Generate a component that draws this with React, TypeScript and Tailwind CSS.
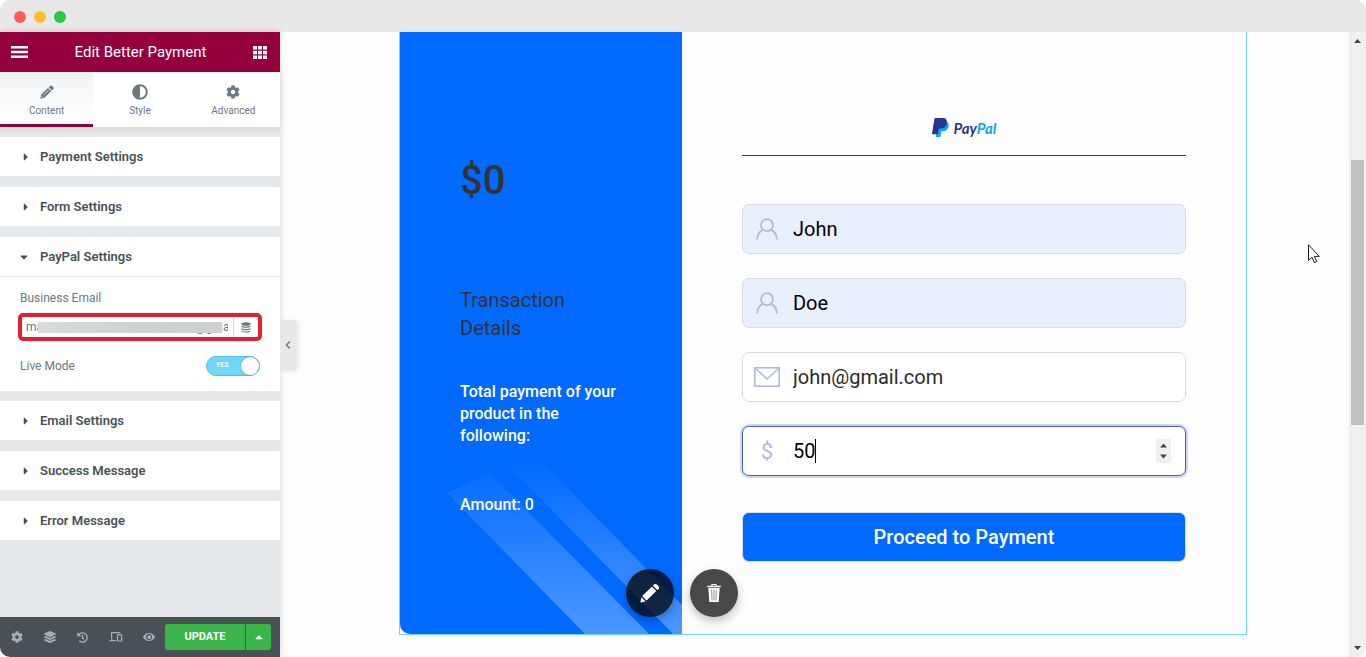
import React from "react";
import {
  FaAdjust,
  FaCaretDown,
  FaCaretRight,
  FaCaretUp,
  FaCog,
  FaEye,
  FaHistory,
  FaLayerGroup,
} from "react-icons/fa";

function TitleBar() {
  return (
    <div className="flex h-8 shrink-0 items-center gap-2 bg-[#e8e8e8] px-[14px] pt-[2px]">
      <span className="size-3 rounded-full bg-[#fc5f57]" />
      <span className="size-3 rounded-full bg-[#fdbc2e]" />
      <span className="size-3 rounded-full bg-[#28c841]" />
    </div>
  );
}

function PencilIcon() {
  return (
    <svg viewBox="0 0 14 14" className="my-px size-[14px]" fill="currentColor">
      <path d="M10 .9c.6-.6 1.300-.6 1.800-.1l1.500 1.500c.5.5.5 1.200 0 1.800l-1.400 1.300L8.700 2.200z" />
      <path d="M8 2.900l3.200 3.200-6.700 6.700-3.500.9c-.4.100-.7-.2-.6-.6l.8-3.500z" />
      <path d="M3.300 10.300l5.300-5.300" stroke="#f7f8f9" strokeWidth="0.700" fill="none" />
      <path d="M1.600 11.200l1.300 1.300" stroke="#f7f8f9" strokeWidth="0.900" fill="none" />
    </svg>
  );
}

function Tab({ label, icon, active }: { label: string; icon: React.ReactNode; active?: boolean }) {
  return (
    <button
      type="button"
      className={
        active
          ? "flex flex-1 flex-col items-center border-b-[3px] border-[#93003c] bg-linear-to-b from-[#f1f3f5] to-white pt-3 text-[#6d7882]"
          : "flex flex-1 flex-col items-center border-b-[3px] border-white bg-white pt-3 text-[#6d7882]"
      }
    >
      {icon}
      <span className="mt-[3px] text-[10px] leading-4">{label}</span>
    </button>
  );
}

function Section({ title, open, children }: { title: string; open?: boolean; children?: React.ReactNode }) {
  return (
    <section className="bg-white">
      <button
        type="button"
        aria-expanded={!!open}
        className="flex h-10 w-full items-center border-b border-[#e6e9ec] text-left text-[13px] font-semibold text-[#495157]"
      >
        <span className="flex w-10 items-center pl-[18px]">
          {open ? <FaCaretDown className="size-3" /> : <FaCaretRight className="ml-[2px] size-3" />}
        </span>
        {title}
      </button>
      {children}
    </section>
  );
}

function DevicesIcon() {
  return (
    <svg viewBox="0 0 14 12" className="h-3 w-[14px]" fill="none" stroke="currentColor" strokeWidth="1.2">
      <path d="M2.6 8.5V1.6h8.8M0.6 9.7h6.6" />
      <rect x="8.6" y="3.6" width="4" height="6.4" rx="0.4" />
    </svg>
  );
}

function Sidebar() {
  return (
    <aside className="relative flex w-[280px] shrink-0 flex-col bg-[#e6e9ec] shadow-[0_0_6px_rgba(0,0,0,0.16)]">
      <header className="flex h-10 items-center justify-between bg-[#93003c] pr-[13px] pl-[11px] text-white">
        <button type="button" aria-label="Menu">
          <svg viewBox="0 0 17 12" className="h-3 w-[17px]" fill="currentColor">
            <path d="M0 0h17v2.4H0zM0 4.8h17v2.4H0zM0 9.6h17v2.4H0z" />
          </svg>
        </button>
        <h1 className="text-[15px] leading-5">Edit Better Payment</h1>
        <button type="button" aria-label="Widgets">
          <svg viewBox="0 0 14 13" className="h-[13px] w-[14px]" fill="currentColor">
            <path d="M0 0h4v3.5H0zM5 0h4v3.5H5zM10 0h4v3.5h-4zM0 4.7h4v3.5H0zM5 4.7h4v3.5H5zM10 4.7h4v3.5h-4zM0 9.4h4v3.5H0zM5 9.4h4v3.5H5zM10 9.4h4v3.5h-4z" />
          </svg>
        </button>
      </header>
      <nav className="flex h-[55px] shadow-[0_2px_8px_rgba(0,0,0,0.08)]">
        <Tab label="Content" active icon={<PencilIcon />} />
        <Tab label="Style" icon={<FaAdjust className="size-4" />} />
        <Tab label="Advanced" icon={<FaCog className="my-px size-[14px]" />} />
      </nav>
      <div className="flex flex-1 flex-col gap-[10px] py-[10px]">
        <Section title="Payment Settings" />
        <Section title="Form Settings" />
        <Section title="PayPal Settings" open>
          <div className="flex flex-col px-[18px] pt-[13px] pb-[15px] text-xs text-[#6d7882]">
            <label htmlFor="business-email" className="px-[2px] leading-4">
              Business Email
            </label>
            <div className="relative mt-[7px] flex h-7 overflow-hidden rounded-[5px] border-4 border-[#e81e33]">
              <input
                id="business-email"
                type="text"
                readOnly
                value={"ma" + "\u00a0".repeat(51) + "@gmail.com"}
                className="my-px mr-[5px] ml-1 min-w-0 flex-1 outline-none"
              />
              <span className="absolute top-[5px] right-9 left-4 h-[11px] bg-linear-to-r from-[#d9dcdd] via-[#cfd2d3] to-[#ccd0d1]" />
              <button
                type="button"
                aria-label="Dynamic tags"
                className="flex w-[25px] items-center justify-center border-l border-[#d5dadf]"
              >
                <svg viewBox="0 0 10 11" className="h-[11px] w-[10px]" fill="#6d7882">
                  <ellipse cx="5" cy="2" rx="4.6" ry="1.8" />
                  <path d="M.4 3.4c1.2 1.3 8 1.3 9.2 0v1.3c-1.2 1.5-8 1.5-9.2 0zM.4 5.9c1.2 1.3 8 1.3 9.2 0v1.3c-1.2 1.5-8 1.5-9.2 0zM.4 8.4c1.2 1.3 8 1.3 9.2 0v1.1c-1.2 1.6-8 1.6-9.2 0z" />
                </svg>
              </button>
            </div>
            <label className="mt-[15px] flex h-5 items-center justify-between px-[2px]">
              Live Mode
              <input type="checkbox" defaultChecked className="peer sr-only" />
              <span className="flex h-5 w-[54px] items-center justify-between rounded-full border border-[#5fb9e0] bg-[#71d7f7] pl-[9px] text-[7px] font-medium text-white">
                YES
                <span className="size-[18px] rounded-full bg-white shadow-[0_0_2px_rgba(0,0,0,0.3)]" />
              </span>
            </label>
          </div>
        </Section>
        <Section title="Email Settings" />
        <Section title="Success Message" />
        <Section title="Error Message" />
      </div>
      <footer className="flex h-10 items-center bg-[#495157] pr-[9px] text-[#a4afb7]">
        <div className="flex flex-1 items-center">
          <button type="button" aria-label="Settings" className="flex flex-1 justify-center">
            <FaCog className="size-3" />
          </button>
          <button type="button" aria-label="Navigator" className="flex flex-1 justify-center">
            <FaLayerGroup className="size-3" />
          </button>
          <button type="button" aria-label="History" className="flex flex-1 justify-center">
            <FaHistory className="size-[11px]" />
          </button>
          <button type="button" aria-label="Responsive mode" className="flex flex-1 justify-center">
            <DevicesIcon />
          </button>
          <button type="button" aria-label="Preview" className="flex flex-1 justify-center">
            <FaEye className="size-3" />
          </button>
        </div>
        <button
          type="button"
          className="h-[26px] w-20 rounded-l-[3px] bg-[#39b54a] text-[11px] font-bold text-white"
        >
          UPDATE
        </button>
        <button
          type="button"
          aria-label="Save options"
          className="ml-px flex h-[26px] w-[25px] items-center justify-center rounded-r-[3px] bg-[#39b54a] text-white"
        >
          <FaCaretUp className="size-3" />
        </button>
      </footer>
      <button
        type="button"
        aria-label="Hide panel"
        className="absolute top-[288px] left-full flex h-[50px] w-4 items-center justify-center rounded-r-[2px] bg-[#e6e9ec] text-[#6d7882] shadow-[2px_1px_4px_rgba(0,0,0,0.1)]"
      >
        <svg viewBox="0 0 6 8" className="h-2 w-[6px]" fill="none" stroke="currentColor" strokeWidth="1.4">
          <path d="M4.8.6L1.4 4l3.4 3.4" />
        </svg>
      </button>
    </aside>
  );
}

function PayPalLogo() {
  return (
    <div className="flex items-center gap-[5px]">
      <svg viewBox="0 0 17 19" className="h-[19px] w-[17px]">
        <path
          fill="#0aa5fa"
          d="M14.6 3.4c1.9 1 2.4 2.9 2 5-.7 3.200-2.900 4.800-6.100 4.800H9.300l-.9 5.800H3.800l.3-2.400L6.500 3.400z"
        />
        <path
          fill="#283593"
          d="M3.300 0h7.300c3.300 0 4.700 2 4.200 5.200-.6 3.500-2.900 5.200-6.300 5.200H6.800l-.9 5.800H.2C0 16.200 0 16 0 15.800L2.500.7C2.600.2 2.800 0 3.300 0z"
        />
      </svg>
      <span className="font-['Lato',sans-serif] text-[15px] leading-4 font-bold text-[#283593] italic">
        Pay<span className="text-[#0aa5fa]">Pal</span>
      </span>
    </div>
  );
}

function UserIcon() {
  return (
    <svg viewBox="0 0 22 22" className="h-[22px] w-[22px]" fill="none" stroke="#b0bade" strokeWidth="1.8">
      <circle cx="11" cy="7.200" r="6" />
      <path d="M1.200 21.500c0-4.600 2.200-7.900 5.600-9.600M20.800 21.500c0-4.600-2.200-7.900-5.600-9.600" />
    </svg>
  );
}

function MailIcon() {
  return (
    <svg viewBox="0 0 26 20" className="h-5 w-[26px]" fill="none" stroke="#b0bade" strokeWidth="1.6">
      <rect x="0.8" y="0.8" width="24.400" height="18.400" />
      <path d="M1 1l12 11L25 1" />
    </svg>
  );
}

function Field(props: {
  label: string;
  type: string;
  value: string;
  icon: React.ReactNode;
  filled?: boolean;
}) {
  return (
    <label
      className={
        props.filled
          ? "flex h-[50px] items-center rounded-[7px] border border-[#d9dce3] bg-[#e8f0fe] text-black"
          : "flex h-[50px] items-center rounded-[7px] border border-[#dbdbdb] bg-white text-[#2b2b2b]"
      }
    >
      <span className="mr-[2px] flex w-12 shrink-0 justify-center">{props.icon}</span>
      <input
        type={props.type}
        aria-label={props.label}
        defaultValue={props.value}
        className="min-w-0 flex-1 bg-transparent text-xl outline-none"
      />
    </label>
  );
}

function AmountField() {
  return (
    <label className="flex h-[50px] items-center rounded-[7px] border border-[#485fc7] bg-white pr-[14px] text-black shadow-[0_0_0_2px_rgba(72,95,199,0.25)]">
      <span className="mr-[2px] flex w-12 shrink-0 justify-center text-[22px] text-[#b0bade]">$</span>
      <span className="relative flex min-w-0 flex-1">
        <input
          type="number"
          aria-label="Amount"
          defaultValue={50}
          className="w-full [appearance:textfield] bg-transparent text-xl outline-none [&::-webkit-inner-spin-button]:appearance-none"
        />
        <span className="absolute inset-y-[2px] left-[22px] w-px bg-black" />
      </span>
      <span className="flex h-6 w-[15px] flex-col items-center justify-between bg-[#f0f0f0] py-1">
        <svg viewBox="0 0 7 5" className="h-[5px] w-[7px]" fill="#444">
          <path d="M0 4.500L3.500.5 7 4.500z" />
        </svg>
        <svg viewBox="0 0 7 5" className="h-[5px] w-[7px]" fill="#444">
          <path d="M0 .5l3.500 4L7 .5z" />
        </svg>
      </span>
    </label>
  );
}

function Summary() {
  return (
    <div className="relative w-1/3 overflow-hidden rounded-bl-[10px] bg-[#006aff] px-[60px] pt-[124px]">
      <svg viewBox="0 0 235 190" className="absolute right-0 bottom-0 h-[190px] w-[235px]">
        <defs>
          <linearGradient id="beam" x1="0" y1="0" x2="0" y2="190" gradientUnits="userSpaceOnUse">
            <stop offset="0.05" stopColor="#fff" stopOpacity="0" />
            <stop offset="0.2" stopColor="#fff" stopOpacity="0.04" />
            <stop offset="0.5" stopColor="#fff" stopOpacity="0.14" />
            <stop offset="1" stopColor="#fff" stopOpacity="0.3" />
          </linearGradient>
        </defs>
        <path fill="url(#beam)" d="M0 49L43 29 202 190H138zM61 21L86 9 235 161V190H226z" />
      </svg>
      <div className="relative">
        <p className="text-[40px] leading-[50px] font-medium text-[#333]">$0</p>
        <h2 className="mt-20 text-xl leading-7 text-[#333]">Transaction Details</h2>
        <p className="mt-[39px] leading-[22px] font-medium text-white">
          Total payment of your product in the following:
        </p>
        <p className="mt-[47px] leading-[22px] font-medium text-white">Amount: 0</p>
      </div>
    </div>
  );
}

function PaymentForm() {
  return (
    <form className="flex w-2/3 flex-col px-[60px] pt-[86px] pb-[72px]" onSubmit={(e) => e.preventDefault()}>
      <div className="flex justify-center border-b border-[#0842a5] pb-[18px]">
        <PayPalLogo />
      </div>
      <div className="mt-12 flex flex-col gap-6">
        <Field label="First name" type="text" value="John" icon={<UserIcon />} filled />
        <Field label="Last name" type="text" value="Doe" icon={<UserIcon />} filled />
        <Field label="Email" type="email" value="john@gmail.com" icon={<MailIcon />} />
        <AmountField />
      </div>
      <button
        type="submit"
        className="mt-9 h-[50px] rounded-[7px] border border-[#dbdbdb] bg-[#006aff] text-xl font-medium text-white"
      >
        Proceed to Payment
      </button>
    </form>
  );
}

function WidgetActions() {
  return (
    <div className="absolute bottom-[17px] left-1/3 flex -translate-x-1/2 gap-4 text-white">
      <button
        type="button"
        aria-label="Edit"
        className="flex size-12 items-center justify-center rounded-full bg-[#020101]/75 shadow-[0_4px_10px_rgba(0,0,0,0.25)]"
      >
        <svg viewBox="0 0 20 20" className="size-5" fill="currentColor">
          <path d="M11.900 3.700l4.400 4.400L6.600 17.500 2.200 13.100z" />
          <path d="M12.900 2.700l1.400-1.400c1.600-1.700 6.100 2.700 4.500 4.400l-1.500 1.400zM1.500 14.300l4 4-4.300 1.200c-.5.1-.8-.2-.7-.7z" />
        </svg>
      </button>
      <button
        type="button"
        aria-label="Delete"
        className="flex size-12 items-center justify-center rounded-full bg-[#0b0b0b]/75 shadow-[0_4px_10px_rgba(0,0,0,0.25)]"
      >
        <svg viewBox="0 0 14 18" className="h-[18px] w-[14px]" fill="currentColor">
          <path d="M.3 1.800h3.900V.9c0-.5.4-.9.900-.9h3.800c.5 0 .9.4.9.900v.900h3.900v1.400H.3zM5.300 1v.800h3.400V1z" fillRule="evenodd" />
          <path d="M1.300 4h11.400l-1 14H2.300z" />
          <path d="M4.700 5.500l.3 11M7 5.500v11M9.300 5.500l-.3 11" stroke="#777" strokeWidth="0.800" />
        </svg>
      </button>
    </div>
  );
}

function Scrollbar() {
  return (
    <div className="flex w-[17px] shrink-0 flex-col items-center bg-[#f0f0f0] pt-[7px] pb-[7px]">
      <svg viewBox="0 0 7 4" className="h-1 w-[7px]" fill="#444">
        <path d="M3.500 0L7 4H0z" />
      </svg>
      <div className="flex w-full flex-1 flex-col items-center">
        <div className="flex-[117]" />
        <div className="w-[13px] flex-[265] bg-[#c1c1c1]" />
        <div className="flex-[221]" />
      </div>
      <svg viewBox="0 0 7 4" className="h-1 w-[7px]" fill="#444">
        <path d="M0 0h7L3.500 4z" />
      </svg>
    </div>
  );
}

export default function App() {
  return (
    <div className="relative flex min-h-screen flex-col overflow-hidden rounded-[10px] bg-[#fdfdfd] font-['Roboto',sans-serif]">
      <TitleBar />
      <div className="flex flex-1">
        <Sidebar />
        <main className="min-w-0 flex-1 pr-[102px] pb-[22px] pl-[119px]">
          <div className="relative flex border border-t-0 border-[#71d7f7]">
            <Summary />
            <PaymentForm />
            <WidgetActions />
          </div>
        </main>
        <Scrollbar />
      </div>
      <svg viewBox="0 0 12 20" className="absolute top-[244px] right-[46px] h-5 w-3" fill="#fff" stroke="#1a1a2e" strokeWidth="1">
        <path d="M.5.8v15.700l3.600-3.300 2.300 5.400 2.300-1-2.300-5.200h4.900z" />
      </svg>
    </div>
  );
}
